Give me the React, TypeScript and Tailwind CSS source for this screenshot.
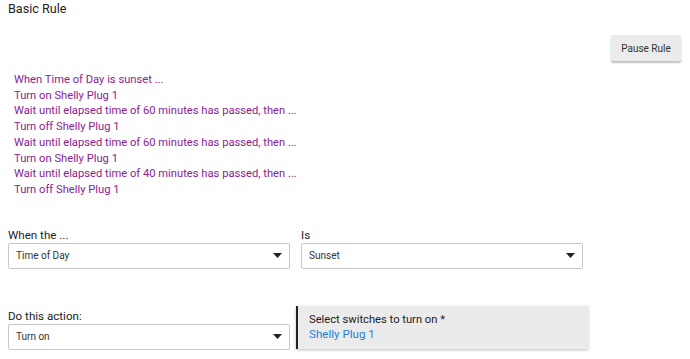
const lines = [
  "When Time of Day is sunset ...",
  "Turn on Shelly Plug 1",
  "Wait until elapsed time of 60 minutes has passed, then ...",
  "Turn off Shelly Plug 1",
  "Wait until elapsed time of 60 minutes has passed, then ...",
  "Turn on Shelly Plug 1",
  "Wait until elapsed time of 40 minutes has passed, then ...",
  "Turn off Shelly Plug 1",
];

const Select = ({ value }: { value: string }) => (
  <div className="flex h-[26px] w-[282px] items-center justify-between rounded-[2px] border border-[#c8c8c8] bg-white pl-[7px] pr-[7px] text-[10px] text-[#333]">
    <span>{value}</span>
    <svg width="9" height="5" viewBox="0 0 9 5">
      <path d="M0 0h9L4.5 5z" fill="#222" />
    </svg>
  </div>
);

const App = () => {
  return (
    <div className="h-[359px] w-[690px] overflow-hidden bg-white font-['Roboto',sans-serif] text-[#222]">
      <div className="pl-[8px] pt-[0px] text-[12.6px] leading-[17px]">Basic Rule</div>

      <div className="flex justify-end pr-[9px] pt-[18px]">
        <button className="h-[26px] w-[70px] rounded-[2px] bg-[#ebebeb] text-[10px] text-[#333] shadow-[0_2px_2px_rgba(0,0,0,0.25)]">
          Pause Rule
        </button>
      </div>

      <div className="pl-[14px] pt-[11px] text-[11.2px] leading-[15.7px] text-[#8b2290]">
        {lines.map((l, i) => (
          <div key={i}>{l}</div>
        ))}
      </div>

      <div className="flex gap-[11px] pl-[8px] pt-[30px]">
        <div>
          <div className="mb-[1px] text-[11.6px] leading-[14px]">When the ...</div>
          <Select value="Time of Day" />
        </div>
        <div>
          <div className="mb-[1px] text-[11.6px] leading-[14px]">Is</div>
          <Select value="Sunset" />
        </div>
      </div>

      <div className="flex items-end gap-[6px] pl-[8px] pt-[37px]">
        <div>
          <div className="mb-[1px] text-[11.6px] leading-[14px]">Do this action:</div>
          <Select value="Turn on" />
        </div>
        <div className="mb-[1px] h-[43px] w-[292px] border-l-2 border-[#222] bg-[#ebebeb] pl-[11px] pt-[6px] text-[11.2px] leading-[15px] shadow-[0_1px_3px_rgba(0,0,0,0.25)]">
          <div>Select switches to turn on *</div>
          <div className="text-[11.6px] text-[#1e7fd8]">Shelly Plug 1</div>
        </div>
      </div>
    </div>
  );
};

export default App;
